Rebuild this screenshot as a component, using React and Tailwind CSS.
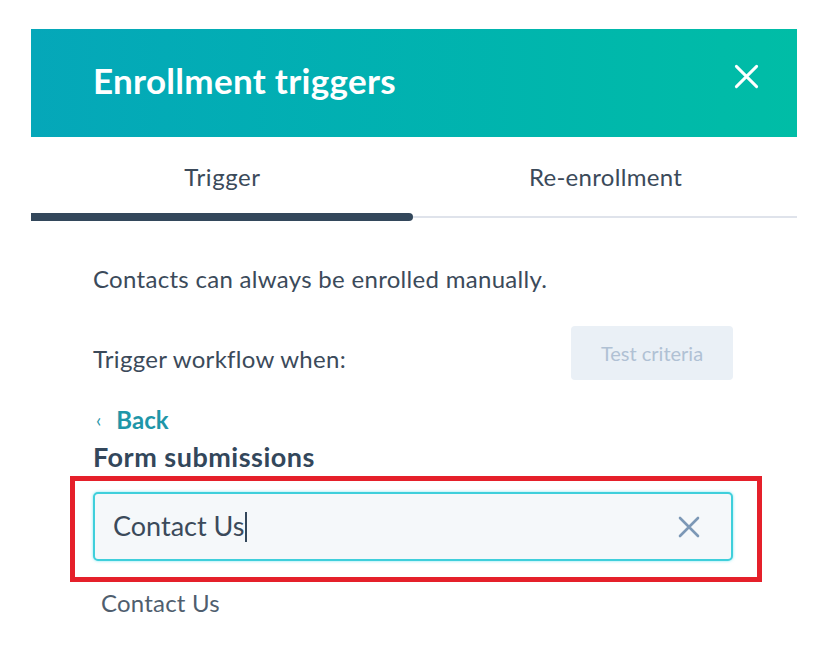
import React, { useState } from "react";

function CloseIcon({ className, strokeWidth = 3 }) {
  return (
    <svg viewBox="0 0 24 24" className={className} fill="none" stroke="currentColor" strokeWidth={strokeWidth} strokeLinecap="round">
      <path d="M3 3L21 21M21 3L3 21" />
    </svg>
  );
}

export default function App() {
  const [query, setQuery] = useState("Contact Us");
  const [tab, setTab] = useState("trigger");

  return (
    <div
      className="min-h-screen bg-white pt-[29px] text-[#3b4a5a]"
      style={{ fontFamily: "Lato, 'Open Sans', sans-serif" }}
    >
      <div className="mx-[31px] w-[766px]">
        {/* Header */}
        <div className="h-[108px] flex items-center justify-between pl-[62px] pr-[37px] bg-gradient-to-r from-[#05a7b9] to-[#00bda6]">
          <h1 className="pb-[5px] text-[35px] font-bold text-white tracking-[0.3px]">Enrollment triggers</h1>
          <button className="mb-[13px] text-white">
            <CloseIcon className="w-[27px] h-[27px]" strokeWidth={2.6} />
          </button>
        </div>

        {/* Tabs */}
        <div className="flex">
          <button
            onClick={() => setTab("trigger")}
            className="flex-1 h-[76px] flex items-center justify-center text-[24px] tracking-[0.6px] pt-[3px] text-[#3b4a5a]"
          >
            Trigger
          </button>
          <button
            onClick={() => setTab("reenroll")}
            className="flex-1 h-[76px] flex items-center justify-center text-[24px] tracking-[0.3px] pt-[3px] text-[#3b4a5a]"
          >
            Re-enrollment
          </button>
        </div>
        <div className="flex items-center h-[8px]">
          <div className={`w-[382px] h-[8px] rounded-r-full ${tab === "trigger" ? "bg-[#33475b]" : "bg-[#dfe3eb]"}`} />
          <div className="flex-1 h-[2px] bg-[#dfe3eb]" />
        </div>

        {/* Body */}
        <div className="pl-[62px] pr-[64px]">
          <p className="mt-[46px] text-[24px] leading-[24px] tracking-[0.3px]">Contacts can always be enrolled manually.</p>

          <div className="mt-[35px] flex items-start justify-between">
            <p className="pt-[21px] text-[24px] leading-[24px] tracking-[0.3px]">Trigger workflow when:</p>
            <button className="w-[162px] h-[54px] rounded-[4px] bg-[#eaf0f6] text-[20px] text-[#b0c1d4]">
              Test criteria
            </button>
          </div>

          <button className="mt-[28px] flex items-center gap-[15px] text-[24px] leading-[24px] font-bold text-[#1f96a8]">
            <span className="text-[19px] font-normal pl-[3px]">‹</span>
            Back
          </button>

          <h2 className="mt-[12px] text-[27px] leading-[26px] font-bold tracking-[0.5px] text-[#33475b]">Form submissions</h2>

          <div className="mt-[6px] -ml-[23px] -mr-[29px] border-[5px] border-[#e5202a] pt-[11px] pb-[16px] pl-[18px] pr-[24px]">
            <div className="h-[69px] flex items-center rounded-[5px] border-2 border-[#3fcfdb] bg-[#f5f8fa] pl-[18px] pr-[30px] shadow-[0_0_3px_rgba(0,208,228,0.5)]">
              <div className="flex-1 flex items-center">
                <input
                  value={query}
                  onChange={(e) => setQuery(e.target.value)}
                  className="bg-transparent outline-none text-[27px] text-[#3b4a5a] caret-transparent"
                  style={{ fontFamily: "Lato, 'Open Sans', sans-serif", width: `${query.length * 0.49}em` }}
                />
                <span className="w-[2px] h-[30px] bg-[#33475b]" />
              </div>
              <button onClick={() => setQuery("")} className="text-[#7c98b6]">
                <CloseIcon className="w-[24px] h-[24px]" strokeWidth={2.6} />
              </button>
            </div>
          </div>

          <p className="mt-[9px] pl-[8px] text-[24px] leading-[24px] tracking-[0.2px] text-[#4f5e6e]">Contact Us</p>
        </div>
      </div>
    </div>
  );
}
